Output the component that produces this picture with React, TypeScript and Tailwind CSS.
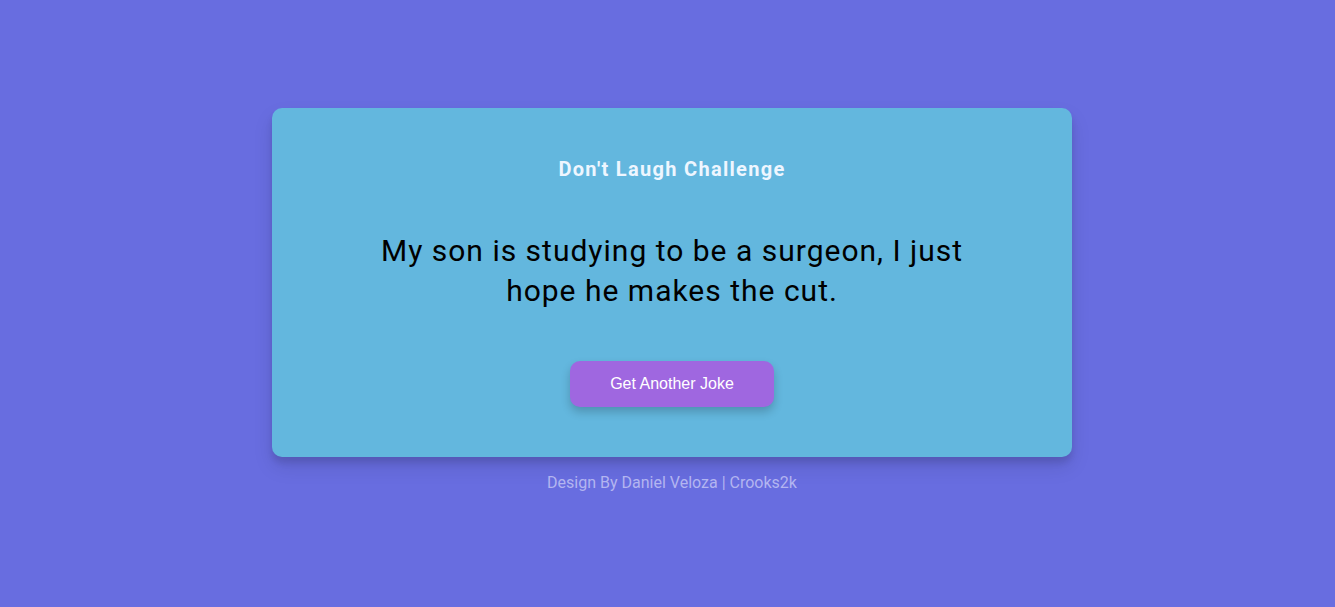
const App = () => {
  return (
    <div className="min-h-screen w-full bg-[#686de0] flex flex-col items-center pt-[108px] pl-[9px] font-['Roboto',sans-serif]">
      <div className="w-[800px] rounded-[10px] bg-[#63b7de] px-[100px] py-[50px] flex flex-col items-center text-center shadow-[0_10px_20px_rgba(0,0,0,0.1),0_6px_6px_rgba(0,0,0,0.1)]">
        <h3 className="text-[20px] leading-[22px] font-bold tracking-[1.3px] text-[#eef6ff]">
          Don't Laugh Challenge
        </h3>
        <p className="mt-[51px] text-[30px] leading-[40px] tracking-[1px] text-black">
          My son is studying to be a surgeon, I just hope he makes the cut.
        </p>
        <button className="mt-[50px] w-[204px] h-[46px] rounded-[10px] bg-[#9f67e0] text-white text-[16px] font-['Liberation_Sans',Arial,sans-serif] shadow-[0_5px_10px_rgba(0,0,0,0.2)]">
          Get Another Joke
        </button>
      </div>
      <p className="mt-[15px] text-[16px] leading-[22px] text-[#b3b5f0]">
        Design By Daniel Veloza | Crooks2k
      </p>
    </div>
  );
};

export default App;
